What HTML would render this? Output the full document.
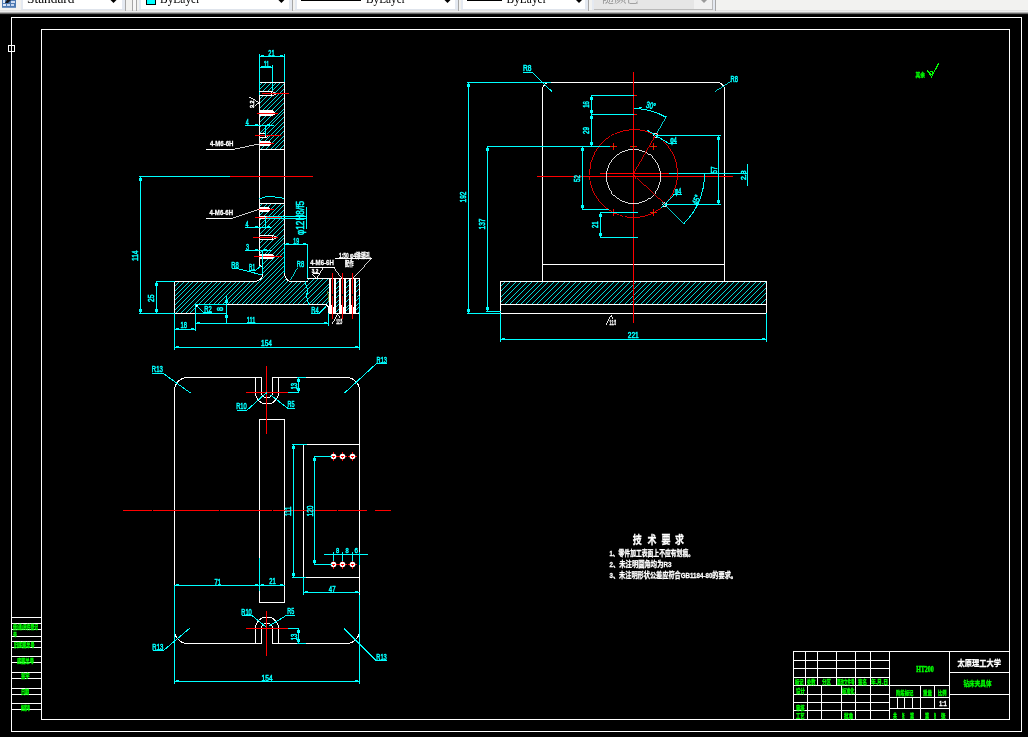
<!DOCTYPE html>
<html lang="zh"><head><meta charset="utf-8"><title>CAD drawing</title>
<style>
html,body{margin:0;padding:0;background:#000;overflow:hidden}
svg{display:block;will-change:transform}
svg path,svg circle{fill:none;shape-rendering:crispEdges}
.c{shape-rendering:crispEdges}
.t{font-family:"Liberation Sans","Noto Sans CJK SC",sans-serif}
.s{font-family:"Liberation Serif","Noto Serif CJK SC",serif}
.k{font-family:"Liberation Sans","Noto Sans CJK SC",sans-serif;font-weight:700}
</style></head><body>
<svg width="1028" height="737" viewBox="0 0 1028 737">
<defs><clipPath id="h1"><path d="M259.5 82.5H284.5V149.5H259.5Z"/></clipPath>
<clipPath id="h2"><path d="M259.5 203.5H284.5V273Q285 281.5 292 281.5H307.5V278.5H329.5V313.5H328.5V308Q328 304.5 324.5 304.5H199.5Q195.5 304.5 195.5 308.5V313.5H174.5V281.5H254Q262.5 281 262.5 274V258H259.5Z"/></clipPath>
<clipPath id="h3"><path d="M336 278.5H339.5V313.5H336Z"/></clipPath>
<clipPath id="h4"><path d="M345.5 278.5H349.5V313.5H345.5Z"/></clipPath>
<clipPath id="h5"><path d="M356 278.5H359.5V313.5H356Z"/></clipPath>
<clipPath id="h6"><path d="M500.5 281.5H766.5V304.5H500.5Z"/></clipPath></defs>
<rect x="0" y="0" width="1028" height="737" fill="#000" stroke="none"/>
<rect x="0" y="0" width="1028" height="10" fill="#f2f2f0" stroke="none"/>
<rect x="0" y="10" width="1028" height="1" fill="#e2e2e2" stroke="none"/>
<rect x="0" y="11" width="1028" height="1" fill="#ececec" stroke="none"/>
<rect x="0" y="12" width="1028" height="1" fill="#b4b4b4" stroke="none"/>
<rect x="0" y="13" width="1028" height="1" fill="#6a6a6a" stroke="none"/>
<rect x="0" y="14" width="1028" height="1" fill="#0c0c0c" stroke="none"/>
<rect x="2" y="0" width="14" height="8" fill="#4d7ab2" stroke="none"/>
<rect x="2" y="7" width="14" height="1" fill="#6f93c2" stroke="none"/>
<rect x="3" y="0" width="2" height="3" fill="#dbe6f6" stroke="none"/>
<rect x="11" y="1" width="4" height="2" fill="#cfdcf1" stroke="none"/>
<polygon points="5,3 7,0 11,0 10,1 8,3" fill="#15171c"/>
<rect x="3" y="4" width="3" height="2" fill="#dfe8f7" stroke="none"/>
<rect x="7" y="4" width="3" height="2" fill="#c6d6ef" stroke="none"/>
<rect x="11" y="4" width="3" height="2" fill="#c6d6ef" stroke="none"/>
<rect x="21" y="0" width="104" height="10" fill="#e4e9f1" stroke="none"/>
<rect x="23" y="0" width="99" height="10" fill="#ffffff" stroke="none"/>
<rect x="21" y="9" width="104" height="1" fill="#dfe4ec" stroke="none"/>
<rect x="125" y="0" width="1" height="11" fill="#a6a6a6" stroke="none"/>
<rect x="132" y="0" width="1" height="11" fill="#a6a6a6" stroke="none"/>
<rect x="136" y="0" width="1" height="11" fill="#a6a6a6" stroke="none"/>
<rect x="133" y="0" width="3" height="10" fill="#f7f7f7" stroke="none"/>
<rect x="139" y="0" width="153" height="10" fill="#e4e9f1" stroke="none"/>
<rect x="141" y="0" width="148" height="10" fill="#ffffff" stroke="none"/>
<rect x="139" y="9" width="153" height="1" fill="#dfe4ec" stroke="none"/>
<rect x="292" y="0" width="1" height="11" fill="#a6a6a6" stroke="none"/>
<rect x="295" y="0" width="163" height="10" fill="#e4e9f1" stroke="none"/>
<rect x="297" y="0" width="158" height="10" fill="#ffffff" stroke="none"/>
<rect x="295" y="9" width="163" height="1" fill="#dfe4ec" stroke="none"/>
<rect x="458" y="0" width="1" height="11" fill="#a6a6a6" stroke="none"/>
<rect x="461" y="0" width="127" height="10" fill="#e4e9f1" stroke="none"/>
<rect x="463" y="0" width="122" height="10" fill="#ffffff" stroke="none"/>
<rect x="461" y="9" width="127" height="1" fill="#dfe4ec" stroke="none"/>
<rect x="588" y="0" width="1" height="11" fill="#a6a6a6" stroke="none"/>
<rect x="592" y="0" width="123" height="10" fill="#e4e9f1" stroke="none"/>
<rect x="594" y="0" width="118" height="10" fill="#e6e6e6" stroke="none"/>
<rect x="592" y="9" width="123" height="1" fill="#dfe4ec" stroke="none"/>
<rect x="715" y="0" width="1" height="11" fill="#a6a6a6" stroke="none"/>
<rect x="694" y="0" width="18" height="9" fill="#f1f1f1" stroke="none"/>
<rect x="594" y="9" width="119" height="1" fill="#b9b9b9" stroke="none"/>
<rect x="712" y="0" width="1" height="10" fill="#b9b9b9" stroke="none"/>
<text class="s" x="27" y="2.6" fill="#000" font-size="12.5" textLength="47.5" lengthAdjust="spacingAndGlyphs">Standard</text>
<text class="s" x="160" y="2.6" fill="#000" font-size="12.5" textLength="40" lengthAdjust="spacingAndGlyphs">ByLayer</text>
<text class="s" x="366" y="2.6" fill="#000" font-size="12.5" textLength="39.5" lengthAdjust="spacingAndGlyphs">ByLayer</text>
<text class="s" x="506.5" y="2.6" fill="#000" font-size="12.5" textLength="40" lengthAdjust="spacingAndGlyphs">ByLayer</text>
<text class="s" x="602" y="3.2" fill="#8c8c8c" font-size="12" textLength="36.5" lengthAdjust="spacingAndGlyphs">随颜色</text>
<rect x="146" y="0" width="10" height="5" fill="#000" stroke="none"/>
<rect x="147" y="0" width="8" height="4" fill="#00ffff" stroke="none"/>
<rect x="301" y="0" width="60" height="1" fill="#000" stroke="none"/>
<rect x="467" y="0" width="35" height="1" fill="#000" stroke="none"/>
<polygon points="110.5,0 116.5,0 113.5,3" fill="#000"/>
<polygon points="278.4,0 284.4,0 281.4,3" fill="#000"/>
<polygon points="444.5,0 450.5,0 447.5,3" fill="#000"/>
<polygon points="576,0 582,0 579,3" fill="#000"/>
<polygon points="701,0 707,0 704,3" fill="#9a9a9a"/>
<path d="M11 17.5H1022" stroke="#ffffff" stroke-width="1" class="c"/>
<path d="M11 731.5H1022" stroke="#ffffff" stroke-width="1" class="c"/>
<path d="M11.5 17V732" stroke="#ffffff" stroke-width="1" class="c"/>
<path d="M1021.5 17V732" stroke="#ffffff" stroke-width="1" class="c"/>
<path d="M41 29.5H1010" stroke="#ffffff" stroke-width="1" class="c"/>
<path d="M41 719.5H1010" stroke="#ffffff" stroke-width="1" class="c"/>
<path d="M41.5 29V720" stroke="#ffffff" stroke-width="1" class="c"/>
<path d="M1009.5 29V720" stroke="#ffffff" stroke-width="1" class="c"/>
<rect x="8.5" y="45.5" width="6" height="6" fill="none" stroke="#fff" stroke-width="1" class="c"/>
<path d="M11 617.5H42" stroke="#ffffff" stroke-width="1" class="c"/>
<path d="M11 623.5H42" stroke="#ffffff" stroke-width="1" class="c"/>
<path d="M11 629.5H42" stroke="#ffffff" stroke-width="1" class="c"/>
<path d="M11 636.5H42" stroke="#ffffff" stroke-width="1" class="c"/>
<path d="M11 641.5H42" stroke="#ffffff" stroke-width="1" class="c"/>
<path d="M11 647.5H42" stroke="#ffffff" stroke-width="1" class="c"/>
<path d="M11 656.5H42" stroke="#ffffff" stroke-width="1" class="c"/>
<path d="M11 662.5H42" stroke="#ffffff" stroke-width="1" class="c"/>
<path d="M11 672.5H42" stroke="#ffffff" stroke-width="1" class="c"/>
<path d="M11 678.5H42" stroke="#ffffff" stroke-width="1" class="c"/>
<path d="M11 688.5H42" stroke="#ffffff" stroke-width="1" class="c"/>
<path d="M11 694.5H42" stroke="#ffffff" stroke-width="1" class="c"/>
<path d="M11 703.5H42" stroke="#ffffff" stroke-width="1" class="c"/>
<path d="M11 709.5H42" stroke="#ffffff" stroke-width="1" class="c"/>
<text class="k" x="13" y="629.3" fill="#00ff00" font-size="6.2" textLength="25" lengthAdjust="spacingAndGlyphs" stroke="#00ff00" stroke-width="0.3">借(通)用件登记</text>
<text class="k" x="13" y="635.6" fill="#00ff00" font-size="5" textLength="4" lengthAdjust="spacingAndGlyphs" stroke="#00ff00" stroke-width="0.3">号</text>
<text class="k" x="14" y="647.4" fill="#00ff00" font-size="6.2" textLength="20.5" lengthAdjust="spacingAndGlyphs" stroke="#00ff00" stroke-width="0.3">旧底图总号</text>
<text class="k" x="17" y="663" fill="#00ff00" font-size="6.2" textLength="17" lengthAdjust="spacingAndGlyphs" stroke="#00ff00" stroke-width="0.3">底图总号</text>
<text class="k" x="21" y="678.3" fill="#00ff00" font-size="6.2" textLength="8.6" lengthAdjust="spacingAndGlyphs" stroke="#00ff00" stroke-width="0.3">签字</text>
<text class="k" x="21" y="694.2" fill="#00ff00" font-size="6.2" textLength="8.2" lengthAdjust="spacingAndGlyphs" stroke="#00ff00" stroke-width="0.3">日期</text>
<text class="k" x="21" y="710.2" fill="#00ff00" font-size="6.2" textLength="9" lengthAdjust="spacingAndGlyphs" stroke="#00ff00" stroke-width="0.3">档案号</text>
<path d="M793 651.5H1010" stroke="#ffffff" stroke-width="1" class="c"/>
<path d="M793.5 651V720" stroke="#ffffff" stroke-width="1" class="c"/>
<path d="M793 660.5H890" stroke="#ffffff" stroke-width="1" class="c"/>
<path d="M793 668.5H890" stroke="#ffffff" stroke-width="1" class="c"/>
<path d="M793 677.5H890" stroke="#ffffff" stroke-width="1" class="c"/>
<path d="M793 685.5H890" stroke="#ffffff" stroke-width="1" class="c"/>
<path d="M805.5 651V686" stroke="#ffffff" stroke-width="1" class="c"/>
<path d="M817.5 651V686" stroke="#ffffff" stroke-width="1" class="c"/>
<path d="M836.5 651V686" stroke="#ffffff" stroke-width="1" class="c"/>
<path d="M855.5 651V686" stroke="#ffffff" stroke-width="1" class="c"/>
<path d="M870.5 651V686" stroke="#ffffff" stroke-width="1" class="c"/>
<path d="M793 694.5H890" stroke="#ffffff" stroke-width="1" class="c"/>
<path d="M793 702.5H890" stroke="#ffffff" stroke-width="1" class="c"/>
<path d="M793 710.5H890" stroke="#ffffff" stroke-width="1" class="c"/>
<path d="M807.5 685V720" stroke="#ffffff" stroke-width="1" class="c"/>
<path d="M821.5 685V720" stroke="#ffffff" stroke-width="1" class="c"/>
<path d="M841.5 685V720" stroke="#ffffff" stroke-width="1" class="c"/>
<path d="M855.5 685V720" stroke="#ffffff" stroke-width="1" class="c"/>
<path d="M870.5 685V720" stroke="#ffffff" stroke-width="1" class="c"/>
<path d="M889.5 651V720" stroke="#ffffff" stroke-width="1" class="c"/>
<path d="M889 685.5H950" stroke="#ffffff" stroke-width="1" class="c"/>
<path d="M889 697.5H950" stroke="#ffffff" stroke-width="1" class="c"/>
<path d="M889 708.5H950" stroke="#ffffff" stroke-width="1" class="c"/>
<path d="M920.5 685V720" stroke="#ffffff" stroke-width="1" class="c"/>
<path d="M934.5 685V709" stroke="#ffffff" stroke-width="1" class="c"/>
<path d="M897.5 697V709" stroke="#ffffff" stroke-width="1" class="c"/>
<path d="M904.5 697V709" stroke="#ffffff" stroke-width="1" class="c"/>
<path d="M912.5 697V709" stroke="#ffffff" stroke-width="1" class="c"/>
<path d="M949.5 651V720" stroke="#ffffff" stroke-width="1" class="c"/>
<path d="M949 672.5H1010" stroke="#ffffff" stroke-width="1" class="c"/>
<path d="M949 694.5H1010" stroke="#ffffff" stroke-width="1" class="c"/>
<text class="s" x="925" y="671.6" fill="#00ff00" font-size="7.8" textLength="17.5" lengthAdjust="spacingAndGlyphs" text-anchor="middle" font-weight="700" stroke="#00ff00" stroke-width="0.45">HT200</text>
<text class="k" x="957.5" y="666.2" fill="#ffffff" font-size="8.3" textLength="43.5" lengthAdjust="spacingAndGlyphs" stroke="#ffffff" stroke-width="0.3">太原理工大学</text>
<text class="k" x="963.5" y="686.4" fill="#00ff00" font-size="7.2" textLength="28" lengthAdjust="spacingAndGlyphs" stroke="#00ff00" stroke-width="0.3">钻床夹具体</text>
<text class="t" x="939.3" y="706" fill="#ffffff" font-size="7.6" textLength="7.4" lengthAdjust="spacingAndGlyphs" stroke="#ffffff" stroke-width="0.55">1:1</text>
<text class="k" x="795" y="684.3" fill="#00ff00" font-size="6.2" textLength="8.5" lengthAdjust="spacingAndGlyphs" stroke="#00ff00" stroke-width="0.3">标记</text>
<text class="k" x="807" y="684.3" fill="#00ff00" font-size="6.2" textLength="8.5" lengthAdjust="spacingAndGlyphs" stroke="#00ff00" stroke-width="0.3">处数</text>
<text class="k" x="822" y="684.3" fill="#00ff00" font-size="6.2" textLength="9" lengthAdjust="spacingAndGlyphs" stroke="#00ff00" stroke-width="0.3">分区</text>
<text class="k" x="837" y="684.3" fill="#00ff00" font-size="6.2" textLength="17.5" lengthAdjust="spacingAndGlyphs" stroke="#00ff00" stroke-width="0.3">更改文件号</text>
<text class="k" x="858" y="684.3" fill="#00ff00" font-size="6.2" textLength="9" lengthAdjust="spacingAndGlyphs" stroke="#00ff00" stroke-width="0.3">签名</text>
<text class="k" x="871" y="684.3" fill="#00ff00" font-size="6.2" textLength="17" lengthAdjust="spacingAndGlyphs" stroke="#00ff00" stroke-width="0.3">年.月.日</text>
<text class="k" x="796" y="693" fill="#00ff00" font-size="6.2" textLength="9" lengthAdjust="spacingAndGlyphs" stroke="#00ff00" stroke-width="0.3">设计</text>
<text class="k" x="842" y="693" fill="#00ff00" font-size="6.2" textLength="12.5" lengthAdjust="spacingAndGlyphs" stroke="#00ff00" stroke-width="0.3">标准化</text>
<text class="k" x="796" y="710" fill="#00ff00" font-size="6.2" textLength="8.5" lengthAdjust="spacingAndGlyphs" stroke="#00ff00" stroke-width="0.3">审核</text>
<text class="k" x="796" y="718.3" fill="#00ff00" font-size="6.2" textLength="8.5" lengthAdjust="spacingAndGlyphs" stroke="#00ff00" stroke-width="0.3">工艺</text>
<text class="k" x="844" y="718.3" fill="#00ff00" font-size="6.2" textLength="9" lengthAdjust="spacingAndGlyphs" stroke="#00ff00" stroke-width="0.3">批准</text>
<text class="k" x="896" y="695.2" fill="#00ff00" font-size="6.2" textLength="17.5" lengthAdjust="spacingAndGlyphs" stroke="#00ff00" stroke-width="0.3">阶段标记</text>
<text class="k" x="923" y="695.2" fill="#00ff00" font-size="6.2" textLength="9" lengthAdjust="spacingAndGlyphs" stroke="#00ff00" stroke-width="0.3">重量</text>
<text class="k" x="938" y="695.2" fill="#00ff00" font-size="6.2" textLength="8.5" lengthAdjust="spacingAndGlyphs" stroke="#00ff00" stroke-width="0.3">比例</text>
<text class="k" x="893" y="717.5" fill="#00ff00" font-size="6.2" textLength="4" lengthAdjust="spacingAndGlyphs" stroke="#00ff00" stroke-width="0.3">共</text>
<text class="k" x="902" y="717.5" fill="#00ff00" font-size="6.2" textLength="2.5" lengthAdjust="spacingAndGlyphs" stroke="#00ff00" stroke-width="0.3">张</text>
<text class="k" x="910" y="717.5" fill="#00ff00" font-size="6.2" textLength="4" lengthAdjust="spacingAndGlyphs" stroke="#00ff00" stroke-width="0.3">第</text>
<text class="k" x="925" y="717.5" fill="#00ff00" font-size="6.2" textLength="4" lengthAdjust="spacingAndGlyphs" stroke="#00ff00" stroke-width="0.3">第</text>
<text class="k" x="934" y="717.5" fill="#00ff00" font-size="6.2" textLength="2" lengthAdjust="spacingAndGlyphs" stroke="#00ff00" stroke-width="0.3">张</text>
<text class="k" x="941" y="717.5" fill="#00ff00" font-size="6.2" textLength="4.5" lengthAdjust="spacingAndGlyphs" stroke="#00ff00" stroke-width="0.3">张</text>
<text class="k" x="915.5" y="76.8" fill="#00ff00" font-size="6.2" textLength="9.5" lengthAdjust="spacingAndGlyphs" stroke="#00ff00" stroke-width="0.3">其余</text>
<path d="M927.2 70.2L931.5 77L938.7 63.3" stroke="#00ff00" stroke-width="1"/>
<circle cx="931.3" cy="72.6" r="1.6" stroke="#00ff00" stroke-width="1"/>
<text class="k" x="632.8" y="543.8" fill="#ffffff" font-size="11.5" textLength="9" lengthAdjust="spacingAndGlyphs" stroke="#ffffff" stroke-width="0.3">技</text>
<text class="k" x="647.5" y="543.8" fill="#ffffff" font-size="11.5" textLength="9" lengthAdjust="spacingAndGlyphs" stroke="#ffffff" stroke-width="0.3">术</text>
<text class="k" x="661.5" y="543.8" fill="#ffffff" font-size="11.5" textLength="9" lengthAdjust="spacingAndGlyphs" stroke="#ffffff" stroke-width="0.3">要</text>
<text class="k" x="675" y="543.8" fill="#ffffff" font-size="11.5" textLength="9" lengthAdjust="spacingAndGlyphs" stroke="#ffffff" stroke-width="0.3">求</text>
<text class="k" x="609.5" y="556.2" fill="#ffffff" font-size="7.8" textLength="84.5" lengthAdjust="spacingAndGlyphs" stroke="#ffffff" stroke-width="0.3">1、零件加工表面上不应有划痕。</text>
<text class="k" x="609.5" y="567.2" fill="#ffffff" font-size="7.8" textLength="62" lengthAdjust="spacingAndGlyphs" stroke="#ffffff" stroke-width="0.3">2、未注明圆角均为R3</text>
<text class="k" x="609.5" y="578.2" fill="#ffffff" font-size="7.8" textLength="127.5" lengthAdjust="spacingAndGlyphs" stroke="#ffffff" stroke-width="0.3">3、未注明形状公差应符合GB1184-80的要求。</text>
<path clip-path="url(#h1)" d="M189.8 150L257.8 82M194.5 150L262.5 82M199.2 150L267.2 82M203.9 150L271.9 82M208.6 150L276.6 82M213.3 150L281.3 82M218 150L286 82M222.7 150L290.7 82M227.4 150L295.4 82M232.1 150L300.1 82M236.8 150L304.8 82M241.5 150L309.5 82M246.2 150L314.2 82M250.9 150L318.9 82M255.6 150L323.6 82M260.3 150L328.3 82M265 150L333 82M269.7 150L337.7 82M274.4 150L342.4 82M279.1 150L347.1 82M283.8 150L351.8 82M288.5 150L356.5 82" stroke="#00ffff" stroke-width="0.85" class="c"/>
<path clip-path="url(#h2)" d="M62.5 314L173.5 203M67.2 314L178.2 203M71.9 314L182.9 203M76.6 314L187.6 203M81.3 314L192.3 203M86 314L197 203M90.7 314L201.7 203M95.4 314L206.4 203M100.1 314L211.1 203M104.8 314L215.8 203M109.5 314L220.5 203M114.2 314L225.2 203M118.9 314L229.9 203M123.6 314L234.6 203M128.3 314L239.3 203M133 314L244 203M137.7 314L248.7 203M142.4 314L253.4 203M147.1 314L258.1 203M151.8 314L262.8 203M156.5 314L267.5 203M161.2 314L272.2 203M165.9 314L276.9 203M170.6 314L281.6 203M175.3 314L286.3 203M180 314L291 203M184.7 314L295.7 203M189.4 314L300.4 203M194.1 314L305.1 203M198.8 314L309.8 203M203.5 314L314.5 203M208.2 314L319.2 203M212.9 314L323.9 203M217.6 314L328.6 203M222.3 314L333.3 203M227 314L338 203M231.7 314L342.7 203M236.4 314L347.4 203M241.1 314L352.1 203M245.8 314L356.8 203M250.5 314L361.5 203M255.2 314L366.2 203M259.9 314L370.9 203M264.6 314L375.6 203M269.3 314L380.3 203M274 314L385 203M278.7 314L389.7 203M283.4 314L394.4 203M288.1 314L399.1 203M292.8 314L403.8 203M297.5 314L408.5 203M302.2 314L413.2 203M306.9 314L417.9 203M311.6 314L422.6 203M316.3 314L427.3 203M321 314L432 203M325.7 314L436.7 203M330.4 314L441.4 203" stroke="#00ffff" stroke-width="0.85" class="c"/>
<path clip-path="url(#h3)" d="M301.3 314L337.3 278M305.95 314L341.95 278M310.6 314L346.6 278M315.25 314L351.25 278M319.9 314L355.9 278M324.55 314L360.55 278M329.2 314L365.2 278M333.85 314L369.85 278M338.5 314L374.5 278M343.15 314L379.15 278" stroke="#00ffff" stroke-width="0.85" class="c"/>
<path clip-path="url(#h4)" d="M310.6 314L346.6 278M315.25 314L351.25 278M319.9 314L355.9 278M324.55 314L360.55 278M329.2 314L365.2 278M333.85 314L369.85 278M338.5 314L374.5 278M343.15 314L379.15 278M347.8 314L383.8 278M352.45 314L388.45 278" stroke="#00ffff" stroke-width="0.85" class="c"/>
<path clip-path="url(#h5)" d="M319.9 314L355.9 278M324.55 314L360.55 278M329.2 314L365.2 278M333.85 314L369.85 278M338.5 314L374.5 278M343.15 314L379.15 278M347.8 314L383.8 278M352.45 314L388.45 278M357.1 314L393.1 278M361.75 314L397.75 278" stroke="#00ffff" stroke-width="0.85" class="c"/>
<path d="M259.5 54V82" stroke="#00ffff" stroke-width="1" class="c"/>
<path d="M284.5 54V82" stroke="#00ffff" stroke-width="1" class="c"/>
<path d="M259 56.5H285" stroke="#00ffff" stroke-width="1" class="c"/>
<rect x="261" y="55" width="3" height="1" fill="#00ffff" stroke="none"/>
<rect x="280" y="55" width="3" height="1" fill="#00ffff" stroke="none"/>
<text class="t" x="268.3" y="55.6" fill="#00ffff" font-size="9.2" textLength="6.2" lengthAdjust="spacingAndGlyphs" stroke="#00ffff" stroke-width="0.55">21</text>
<path d="M272.5 65V94" stroke="#00ffff" stroke-width="1" class="c"/>
<path d="M259 67.5H273" stroke="#00ffff" stroke-width="1" class="c"/>
<rect x="261" y="66" width="3" height="1" fill="#00ffff" stroke="none"/>
<rect x="268" y="66" width="3" height="1" fill="#00ffff" stroke="none"/>
<text class="t" x="263.8" y="66.5" fill="#00ffff" font-size="9.2" textLength="5.5" lengthAdjust="spacingAndGlyphs" stroke="#00ffff" stroke-width="0.55">11</text>
<path d="M259 82.5H285" stroke="#ffffff" stroke-width="1" class="c"/>
<path d="M259.5 82V265" stroke="#ffffff" stroke-width="1" class="c"/>
<path d="M284.5 82V245" stroke="#ffffff" stroke-width="1" class="c"/>
<path d="M259.5 82V95" stroke="#00ffff" stroke-width="1" class="c"/>
<path d="M259 149.5H285" stroke="#ffffff" stroke-width="1" class="c"/>
<path d="M259 203.5H285" stroke="#ffffff" stroke-width="1" class="c"/>
<path d="M259.5 198.6C264 197.8 267 195.8 271 196.2C275 196.6 277 198.4 284.5 198" stroke="#00ffff" stroke-width="1"/>
<polygon points="260,91 272,91 275.5,93.5 272,96 260,96" fill="#000" class="c"/>
<path d="M259 91.5H272" stroke="#ffffff" stroke-width="1" class="c"/>
<path d="M259 95.5H272" stroke="#ffffff" stroke-width="1" class="c"/>
<path d="M271.5 91V96" stroke="#ffffff" stroke-width="1" class="c"/>
<path d="M271.5 91.5L275.5 93.5L271.5 95.5" stroke="#ffffff" stroke-width="0.9"/>
<path d="M262 93.5H289" stroke="#ff0000" stroke-width="1" class="c"/>
<polygon points="260,110 272,110 276.5,113.5 272,116 260,116" fill="#fff" class="c"/>
<path d="M257 113.5H278" stroke="#ff0000" stroke-width="1" class="c"/>
<polygon points="260,133 266,133 267.5,135.5 266,138 260,138" fill="#000" class="c"/>
<path d="M259 133.5H266" stroke="#ffffff" stroke-width="1" class="c"/>
<path d="M259 137.5H266" stroke="#ffffff" stroke-width="1" class="c"/>
<path d="M265.5 133V138" stroke="#ffffff" stroke-width="1" class="c"/>
<path d="M265.5 133.5L267.5 135.5L265.5 137.5" stroke="#ffffff" stroke-width="0.9"/>
<path d="M255 135.5H281" stroke="#ff0000" stroke-width="1" class="c"/>
<polygon points="260,141 269,141 271.5,143.5 269,146 260,146" fill="#fff" class="c"/>
<path d="M259 143.5H274" stroke="#ff0000" stroke-width="1" class="c"/>
<path d="M245 125.5H274" stroke="#00ffff" stroke-width="1" class="c"/>
<path d="M265.5 125V136" stroke="#00ffff" stroke-width="1" class="c"/>
<rect x="255" y="124" width="3" height="1" fill="#00ffff" stroke="none"/>
<rect x="267" y="124" width="3" height="1" fill="#00ffff" stroke="none"/>
<text class="t" x="245.8" y="124.6" fill="#00ffff" font-size="9.2" textLength="3" lengthAdjust="spacingAndGlyphs" stroke="#00ffff" stroke-width="0.55">4</text>
<path d="M249.3 97L259 102.5L254.5 105" stroke="#ffffff" stroke-width="0.9"/>
<text class="t" x="254" y="108" fill="#ffffff" font-size="5.6" textLength="7.5" lengthAdjust="spacingAndGlyphs" transform="rotate(-90 254 108)" stroke="#ffffff" stroke-width="0.55">3.2</text>
<text class="k" x="209.9" y="146.2" fill="#ffffff" font-size="7.3" textLength="23.5" lengthAdjust="spacingAndGlyphs" stroke="#ffffff" stroke-width="0.3">4-M6-6H</text>
<path d="M206 149.5H234" stroke="#ffffff" stroke-width="1" class="c"/>
<path d="M233 149.5L259.5 143.8" stroke="#ffffff" stroke-width="0.8"/>
<path d="M139 176.5H231" stroke="#00ffff" stroke-width="1" class="c"/>
<path d="M230 176.5H313" stroke="#ff0000" stroke-width="1" class="c"/>
<path d="M140.5 176V314" stroke="#00ffff" stroke-width="1" class="c"/>
<rect x="139" y="178" width="3" height="3" fill="#00ffff" stroke="none"/>
<rect x="139" y="309" width="3" height="3" fill="#00ffff" stroke="none"/>
<text class="t" x="137.6" y="261" fill="#00ffff" font-size="9.2" textLength="10.5" lengthAdjust="spacingAndGlyphs" transform="rotate(-90 137.6 261)" stroke="#00ffff" stroke-width="0.55">114</text>
<path d="M139 313.5H175" stroke="#00ffff" stroke-width="1" class="c"/>
<polygon points="260,207 268,207 270.5,209.5 268,212 260,212" fill="#fff" class="c"/>
<path d="M257 209.5H274" stroke="#ff0000" stroke-width="1" class="c"/>
<polygon points="260,216 266,216 267.5,217.5 266,219 260,219" fill="#000" class="c"/>
<path d="M259 216.5H266" stroke="#ffffff" stroke-width="1" class="c"/>
<path d="M259 218.5H266" stroke="#ffffff" stroke-width="1" class="c"/>
<path d="M265.5 216V219" stroke="#ffffff" stroke-width="1" class="c"/>
<path d="M265.5 216.5L267.5 217.5L265.5 218.5" stroke="#ffffff" stroke-width="0.9"/>
<path d="M255 217.5H281" stroke="#ff0000" stroke-width="1" class="c"/>
<path d="M267 216.5H307" stroke="#00ffff" stroke-width="1" class="c"/>
<path d="M267 218.5H307" stroke="#00ffff" stroke-width="1" class="c"/>
<polygon points="260,235 273,235 275.5,237.5 273,240 260,240" fill="#000" class="c"/>
<path d="M259 235.5H273" stroke="#ffffff" stroke-width="1" class="c"/>
<path d="M259 239.5H273" stroke="#ffffff" stroke-width="1" class="c"/>
<path d="M272.5 235V240" stroke="#ffffff" stroke-width="1" class="c"/>
<path d="M272.5 235.5L275.5 237.5L272.5 239.5" stroke="#ffffff" stroke-width="0.9"/>
<path d="M253 237.5H278" stroke="#ff0000" stroke-width="1" class="c"/>
<polygon points="260,254 272,254 274.5,256.5 272,259 260,259" fill="#fff" class="c"/>
<path d="M254 256.5H282" stroke="#ff0000" stroke-width="1" class="c"/>
<text class="k" x="209.5" y="215.2" fill="#ffffff" font-size="7.3" textLength="23.5" lengthAdjust="spacingAndGlyphs" stroke="#ffffff" stroke-width="0.3">4-M6-6H</text>
<path d="M206 218.5H232" stroke="#ffffff" stroke-width="1" class="c"/>
<path d="M231 218.5L258.5 209.6" stroke="#ffffff" stroke-width="0.8"/>
<path d="M245 227.5H272" stroke="#00ffff" stroke-width="1" class="c"/>
<path d="M265.5 217V229" stroke="#00ffff" stroke-width="1" class="c"/>
<rect x="255" y="226" width="3" height="1" fill="#00ffff" stroke="none"/>
<rect x="267" y="226" width="3" height="1" fill="#00ffff" stroke="none"/>
<text class="t" x="245.6" y="226.6" fill="#00ffff" font-size="9.2" textLength="3" lengthAdjust="spacingAndGlyphs" stroke="#00ffff" stroke-width="0.55">4</text>
<path d="M245 250.5H272" stroke="#00ffff" stroke-width="1" class="c"/>
<path d="M262.5 250V275" stroke="#00ffff" stroke-width="1" class="c"/>
<rect x="255" y="249" width="3" height="1" fill="#00ffff" stroke="none"/>
<rect x="264" y="249" width="3" height="1" fill="#00ffff" stroke="none"/>
<text class="t" x="246" y="249.6" fill="#00ffff" font-size="9.2" textLength="3" lengthAdjust="spacingAndGlyphs" stroke="#00ffff" stroke-width="0.55">3</text>
<text class="t" x="304.4" y="235" fill="#00ffff" font-size="10" textLength="34" lengthAdjust="spacingAndGlyphs" transform="rotate(-90 304.4 235)" stroke="#00ffff" stroke-width="0.55">&#966;12H8/f5</text>
<path d="M306.5 207V229" stroke="#00ffff" stroke-width="1" class="c"/>
<path d="M284 244.5H308" stroke="#00ffff" stroke-width="1" class="c"/>
<rect x="286" y="243" width="3" height="1" fill="#00ffff" stroke="none"/>
<rect x="303" y="243" width="3" height="1" fill="#00ffff" stroke="none"/>
<text class="t" x="293.3" y="243.6" fill="#00ffff" font-size="9.2" textLength="5.8" lengthAdjust="spacingAndGlyphs" stroke="#00ffff" stroke-width="0.55">19</text>
<path d="M284.5 244V274" stroke="#00ffff" stroke-width="1" class="c"/>
<path d="M307.5 244V279" stroke="#00ffff" stroke-width="1" class="c"/>
<path d="M284.5 273Q285 281.5 292 281.5" stroke="#ffffff" stroke-width="1"/>
<path d="M292 281.5H308" stroke="#ffffff" stroke-width="1" class="c"/>
<path d="M262.5 274Q262.5 281 254 281.5" stroke="#ffffff" stroke-width="1"/>
<path d="M259.5 264.5Q259.7 266.3 262.5 266.5" stroke="#ffffff" stroke-width="1"/>
<text class="t" x="231.3" y="268" fill="#00ffff" font-size="9.2" textLength="7.6" lengthAdjust="spacingAndGlyphs" stroke="#00ffff" stroke-width="0.55">R8</text>
<path d="M231.5 268.9H239L262 275" stroke="#00ffff" stroke-width="1"/>
<text class="t" x="249" y="270" fill="#00ffff" font-size="9.2" textLength="6" lengthAdjust="spacingAndGlyphs" stroke="#00ffff" stroke-width="0.55">R1</text>
<path d="M249 270.9H255L261 265.8" stroke="#00ffff" stroke-width="1"/>
<text class="t" x="296.8" y="267" fill="#00ffff" font-size="9.2" textLength="7.4" lengthAdjust="spacingAndGlyphs" stroke="#00ffff" stroke-width="0.55">R8</text>
<path d="M297 267.5L290 279.8" stroke="#00ffff" stroke-width="0.8"/>
<path d="M174 281.5H255" stroke="#ffffff" stroke-width="1" class="c"/>
<path d="M174.5 281V314" stroke="#ffffff" stroke-width="1" class="c"/>
<path d="M174 313.5H196" stroke="#ffffff" stroke-width="1" class="c"/>
<path d="M195.5 313.5V308.5Q195.5 304.5 199.5 304.5" stroke="#ffffff" stroke-width="1"/>
<path d="M199 304.5H325" stroke="#ffffff" stroke-width="1" class="c"/>
<path d="M324.5 304.5Q328 304.5 328.5 308V313.5" stroke="#ffffff" stroke-width="1"/>
<path d="M328 313.5H360" stroke="#ffffff" stroke-width="1" class="c"/>
<path d="M307 278.5H360" stroke="#ffffff" stroke-width="1" class="c"/>
<path d="M359.5 278V297" stroke="#ffffff" stroke-width="1" class="c"/>
<path d="M359.5 296V350" stroke="#00ffff" stroke-width="1" class="c"/>
<path d="M305 281.5L307.6 290L306.6 296L308.6 304.5" stroke="#00ffff" stroke-width="1"/>
<polygon points="329,278 331,278 331.7,314 329,314" fill="#fff" class="c"/>
<polygon points="334.4,278 336,278 335.6,314 333.3,314" fill="#fff" class="c"/>
<polygon points="339,278 341,278 341.7,314 339,314" fill="#fff" class="c"/>
<polygon points="344.4,278 346,278 345.6,314 343.3,314" fill="#fff" class="c"/>
<polygon points="349,278 351,278 351.7,314 349,314" fill="#fff" class="c"/>
<polygon points="354.4,278 356,278 355.6,314 353.3,314" fill="#fff" class="c"/>
<path d="M332.5 273V294" stroke="#ff0000" stroke-width="1" class="c"/>
<path d="M332.5 296V319" stroke="#ff0000" stroke-width="1" class="c"/>
<path d="M342.5 273V294" stroke="#ff0000" stroke-width="1" class="c"/>
<path d="M342.5 296V319" stroke="#ff0000" stroke-width="1" class="c"/>
<path d="M352.5 273V294" stroke="#ff0000" stroke-width="1" class="c"/>
<path d="M352.5 296V319" stroke="#ff0000" stroke-width="1" class="c"/>
<path d="M327.5 291L329 301" stroke="#88aa22" stroke-width="0.7"/>
<path d="M156 281.5H175" stroke="#00ffff" stroke-width="1" class="c"/>
<path d="M156.5 281V314" stroke="#00ffff" stroke-width="1" class="c"/>
<rect x="155" y="283" width="3" height="3" fill="#00ffff" stroke="none"/>
<rect x="155" y="309" width="3" height="3" fill="#00ffff" stroke="none"/>
<text class="t" x="153.8" y="302" fill="#00ffff" font-size="9.2" textLength="7.5" lengthAdjust="spacingAndGlyphs" transform="rotate(-90 153.8 302)" stroke="#00ffff" stroke-width="0.55">25</text>
<path d="M174.5 313V350" stroke="#00ffff" stroke-width="1" class="c"/>
<path d="M195.5 305V331" stroke="#00ffff" stroke-width="1" class="c"/>
<path d="M174 329.5H196" stroke="#00ffff" stroke-width="1" class="c"/>
<rect x="176" y="328" width="3" height="1" fill="#00ffff" stroke="none"/>
<rect x="191" y="328" width="3" height="1" fill="#00ffff" stroke="none"/>
<text class="t" x="180.5" y="328.4" fill="#00ffff" font-size="9.2" textLength="6.5" lengthAdjust="spacingAndGlyphs" stroke="#00ffff" stroke-width="0.55">18</text>
<path d="M195 304.5H227" stroke="#00ffff" stroke-width="1" class="c"/>
<path d="M195 313.5H227" stroke="#00ffff" stroke-width="1" class="c"/>
<path d="M226.5 296V324" stroke="#00ffff" stroke-width="1" class="c"/>
<rect x="225" y="300" width="3" height="3" fill="#00ffff" stroke="none"/>
<rect x="225" y="315" width="3" height="3" fill="#00ffff" stroke="none"/>
<text class="t" x="222.8" y="311" fill="#00ffff" font-size="9.2" textLength="4" lengthAdjust="spacingAndGlyphs" transform="rotate(-90 222.8 311)" stroke="#00ffff" stroke-width="0.55">8</text>
<text class="t" x="204.3" y="311.6" fill="#00ffff" font-size="9.2" textLength="7.5" lengthAdjust="spacingAndGlyphs" stroke="#00ffff" stroke-width="0.55">R2</text>
<path d="M197 306L203 312H212" stroke="#00ffff" stroke-width="1"/>
<path d="M328.5 313V326" stroke="#00ffff" stroke-width="1" class="c"/>
<path d="M195 323.5H329" stroke="#00ffff" stroke-width="1" class="c"/>
<rect x="197" y="322" width="3" height="1" fill="#00ffff" stroke="none"/>
<rect x="324" y="322" width="3" height="1" fill="#00ffff" stroke="none"/>
<text class="t" x="246.8" y="322.6" fill="#00ffff" font-size="9.2" textLength="8.5" lengthAdjust="spacingAndGlyphs" stroke="#00ffff" stroke-width="0.55">111</text>
<path d="M174 347.5H360" stroke="#00ffff" stroke-width="1" class="c"/>
<rect x="176" y="346" width="3" height="1" fill="#00ffff" stroke="none"/>
<rect x="355" y="346" width="3" height="1" fill="#00ffff" stroke="none"/>
<text class="t" x="261" y="346" fill="#00ffff" font-size="9.2" textLength="11" lengthAdjust="spacingAndGlyphs" stroke="#00ffff" stroke-width="0.55">154</text>
<text class="t" x="311.2" y="312.6" fill="#00ffff" font-size="9.2" textLength="7.5" lengthAdjust="spacingAndGlyphs" stroke="#00ffff" stroke-width="0.55">R4</text>
<path d="M311 313.4H319L326 306.5" stroke="#00ffff" stroke-width="1"/>
<text class="k" x="310.2" y="265.2" fill="#ffffff" font-size="7.6" textLength="23.7" lengthAdjust="spacingAndGlyphs" stroke="#ffffff" stroke-width="0.3">4-M6-6H</text>
<path d="M309 267.5H335" stroke="#ffffff" stroke-width="1" class="c"/>
<path d="M334.5 267.5L341.8 277.5" stroke="#ffffff" stroke-width="0.8"/>
<text class="k" x="339" y="258.2" fill="#ffffff" font-size="6.6" textLength="31.5" lengthAdjust="spacingAndGlyphs" stroke="#ffffff" stroke-width="0.3">1:50 &#966;4锥销孔</text>
<text class="k" x="345" y="265.6" fill="#ffffff" font-size="6.6" textLength="8.5" lengthAdjust="spacingAndGlyphs" stroke="#ffffff" stroke-width="0.3">配作</text>
<path d="M335 258.5H372" stroke="#ffffff" stroke-width="1" class="c"/>
<path d="M371 259L353.5 277.8" stroke="#ffffff" stroke-width="0.8"/>
<text class="k" x="311.8" y="272.6" fill="#ffffff" font-size="5" textLength="6.4" lengthAdjust="spacingAndGlyphs" stroke="#ffffff" stroke-width="0.3">3.2</text>
<path d="M312.8 273.5L316.9 278.3L323 268" stroke="#ffffff" stroke-width="0.9"/>
<path d="M313 273.5H320" stroke="#ffffff" stroke-width="1" class="c"/>
<path d="M332.2 323.8L337.6 314L340 318" stroke="#ffffff" stroke-width="0.9"/>
<text class="k" x="336.3" y="323.8" fill="#ffffff" font-size="6.4" textLength="6" lengthAdjust="spacingAndGlyphs" stroke="#ffffff" stroke-width="0.3">12.5</text>
<path clip-path="url(#h6)" d="M476.35 305L500.35 281M481.8 305L505.8 281M487.25 305L511.25 281M492.7 305L516.7 281M498.15 305L522.15 281M503.6 305L527.6 281M509.05 305L533.05 281M514.5 305L538.5 281M519.95 305L543.95 281M525.4 305L549.4 281M530.85 305L554.85 281M536.3 305L560.3 281M541.75 305L565.75 281M547.2 305L571.2 281M552.65 305L576.65 281M558.1 305L582.1 281M563.55 305L587.55 281M569 305L593 281M574.45 305L598.45 281M579.9 305L603.9 281M585.35 305L609.35 281M590.8 305L614.8 281M596.25 305L620.25 281M601.7 305L625.7 281M607.15 305L631.15 281M612.6 305L636.6 281M618.05 305L642.05 281M623.5 305L647.5 281M628.95 305L652.95 281M634.4 305L658.4 281M639.85 305L663.85 281M645.3 305L669.3 281M650.75 305L674.75 281M656.2 305L680.2 281M661.65 305L685.65 281M667.1 305L691.1 281M672.55 305L696.55 281M678 305L702 281M683.45 305L707.45 281M688.9 305L712.9 281M694.35 305L718.35 281M699.8 305L723.8 281M705.25 305L729.25 281M710.7 305L734.7 281M716.15 305L740.15 281M721.6 305L745.6 281M727.05 305L751.05 281M732.5 305L756.5 281M737.95 305L761.95 281M743.4 305L767.4 281M748.85 305L772.85 281M754.3 305L778.3 281M759.75 305L783.75 281M765.2 305L789.2 281M770.65 305L794.65 281" stroke="#00ffff" stroke-width="0.85" class="c"/>
<path d="M542.5 281V90.5Q542.5 82.5 550.5 82.5H716.5Q724.5 82.5 724.5 90.5V281" stroke="#ffffff" stroke-width="1" class="c"/>
<path d="M542 82.5H551" stroke="#00ffff" stroke-width="1" class="c"/>
<path d="M542 264.5H725" stroke="#ffffff" stroke-width="1" class="c"/>
<path d="M500 281.5H767" stroke="#ffffff" stroke-width="1" class="c"/>
<path d="M500 304.5H767" stroke="#ffffff" stroke-width="1" class="c"/>
<path d="M500 313.5H767" stroke="#ffffff" stroke-width="1" class="c"/>
<path d="M500.5 281V314" stroke="#ffffff" stroke-width="1" class="c"/>
<path d="M766.5 281V314" stroke="#ffffff" stroke-width="1" class="c"/>
<path d="M633.5 72V323" stroke="#ff0000" stroke-width="1" class="c"/>
<path d="M537 176.5H733" stroke="#ff0000" stroke-width="1" class="c"/>
<path d="M600 173.5H670" stroke="#ff0000" stroke-width="1" class="c"/>
<path d="M669 173.5H748" stroke="#00ffff" stroke-width="1" class="c"/>
<path d="M747.5 164V186" stroke="#00ffff" stroke-width="1" class="c"/>
<text class="t" x="745.6" y="180" fill="#00ffff" font-size="7" textLength="9.5" lengthAdjust="spacingAndGlyphs" transform="rotate(-90 745.6 180)" stroke="#00ffff" stroke-width="0.55">2.8</text>
<circle cx="633.5" cy="176.5" r="27" stroke="#ffffff" stroke-width="0.85"/>
<circle cx="633.5" cy="173.5" r="44" stroke="#ff0000" stroke-width="0.85" stroke-dasharray="46 1.5 3 1.5" stroke-dashoffset="20"/>
<path d="M630 95.5H637" stroke="#ff0000" stroke-width="1" class="c"/>
<path d="M633.5 92V99" stroke="#ff0000" stroke-width="1" class="c"/>
<rect x="633" y="95" width="1" height="1" fill="#00ff00" stroke="none"/>
<path d="M630 114.5H637" stroke="#ff0000" stroke-width="1" class="c"/>
<path d="M633.5 111V118" stroke="#ff0000" stroke-width="1" class="c"/>
<rect x="633" y="114" width="1" height="1" fill="#00ff00" stroke="none"/>
<path d="M610 146.5H617" stroke="#ff0000" stroke-width="1" class="c"/>
<path d="M613.5 143V150" stroke="#ff0000" stroke-width="1" class="c"/>
<rect x="613" y="146" width="1" height="1" fill="#00ff00" stroke="none"/>
<path d="M630 146.5H637" stroke="#ff0000" stroke-width="1" class="c"/>
<path d="M633.5 143V150" stroke="#ff0000" stroke-width="1" class="c"/>
<rect x="633" y="146" width="1" height="1" fill="#00ff00" stroke="none"/>
<path d="M650 146.5H657" stroke="#ff0000" stroke-width="1" class="c"/>
<path d="M653.5 143V150" stroke="#ff0000" stroke-width="1" class="c"/>
<rect x="653" y="146" width="1" height="1" fill="#00ff00" stroke="none"/>
<path d="M610 212.5H617" stroke="#ff0000" stroke-width="1" class="c"/>
<path d="M613.5 209V216" stroke="#ff0000" stroke-width="1" class="c"/>
<rect x="613" y="212" width="1" height="1" fill="#00ff00" stroke="none"/>
<path d="M630 212.5H637" stroke="#ff0000" stroke-width="1" class="c"/>
<path d="M633.5 209V216" stroke="#ff0000" stroke-width="1" class="c"/>
<rect x="633" y="212" width="1" height="1" fill="#00ff00" stroke="none"/>
<path d="M650 212.5H657" stroke="#ff0000" stroke-width="1" class="c"/>
<path d="M653.5 209V216" stroke="#ff0000" stroke-width="1" class="c"/>
<rect x="653" y="212" width="1" height="1" fill="#00ff00" stroke="none"/>
<path d="M630 237.5H637" stroke="#ff0000" stroke-width="1" class="c"/>
<path d="M633.5 234V241" stroke="#ff0000" stroke-width="1" class="c"/>
<rect x="633" y="237" width="1" height="1" fill="#00ff00" stroke="none"/>
<path d="M633.5 173.5L655.5 135.39" stroke="#ff0000" stroke-width="0.8"/>
<path d="M655.5 135.39L666.75 115.91" stroke="#00ffff" stroke-width="0.8"/>
<path d="M636.5 178.5L664.61 204.61" stroke="#ff0000" stroke-width="0.8"/>
<path d="M664.61 204.61L683.7 223.7" stroke="#00ffff" stroke-width="0.8"/>
<path d="M633.5 173.5L636.5 178.5" stroke="#ff0000" stroke-width="0.8"/>
<path d="M633.5 108.5A65 65 0 0 1 666 117.21" stroke="#00ffff" stroke-width="1"/>
<path d="M704.5 174.5A71 71 0 0 1 683.7 223.7" stroke="#00ffff" stroke-width="1"/>
<rect x="639" y="107" width="3" height="1" fill="#00ffff" stroke="none"/>
<text class="t" x="645.5" y="107.5" fill="#00ffff" font-size="9.2" textLength="9.5" lengthAdjust="spacingAndGlyphs" transform="rotate(14 645.5 107.5)" stroke="#00ffff" stroke-width="0.55">30&#176;</text>
<text class="t" x="697.5" y="205.5" fill="#00ffff" font-size="9.2" textLength="9.5" lengthAdjust="spacingAndGlyphs" transform="rotate(-66 697.5 205.5)" stroke="#00ffff" stroke-width="0.55">45&#176;</text>
<circle cx="655.5" cy="135.39" r="1.8" stroke="#ffffff" stroke-width="0.9"/>
<path d="M653 132.89L658 137.89" stroke="#00ffff" stroke-width="0.8"/>
<path d="M653 137.89L658 132.89" stroke="#ff0000" stroke-width="0.8"/>
<circle cx="664.61" cy="204.61" r="1.8" stroke="#ffffff" stroke-width="0.9"/>
<path d="M662.11 202.11L667.11 207.11" stroke="#00ffff" stroke-width="0.8"/>
<path d="M662.11 207.11L667.11 202.11" stroke="#ff0000" stroke-width="0.8"/>
<text class="t" x="670.2" y="143" fill="#00ffff" font-size="9.2" textLength="6.5" lengthAdjust="spacingAndGlyphs" stroke="#00ffff" stroke-width="0.55">&#966;4</text>
<path d="M647.5 130.39L669 143.5H677" stroke="#00ffff" stroke-width="1"/>
<text class="t" x="674.8" y="193.6" fill="#00ffff" font-size="9.2" textLength="6.5" lengthAdjust="spacingAndGlyphs" stroke="#00ffff" stroke-width="0.55">&#966;4</text>
<path d="M661.61 207.61L674.5 194.2H682" stroke="#00ffff" stroke-width="1"/>
<path d="M591 95.5H634" stroke="#00ffff" stroke-width="1" class="c"/>
<path d="M591 114.5H634" stroke="#00ffff" stroke-width="1" class="c"/>
<path d="M591.5 95V115" stroke="#00ffff" stroke-width="1" class="c"/>
<rect x="590" y="97" width="3" height="3" fill="#00ffff" stroke="none"/>
<rect x="590" y="110" width="3" height="3" fill="#00ffff" stroke="none"/>
<path d="M591.5 114V147" stroke="#00ffff" stroke-width="1" class="c"/>
<rect x="590" y="116" width="3" height="3" fill="#00ffff" stroke="none"/>
<rect x="590" y="142" width="3" height="3" fill="#00ffff" stroke="none"/>
<text class="t" x="589.4" y="107.8" fill="#00ffff" font-size="9.2" textLength="6.5" lengthAdjust="spacingAndGlyphs" transform="rotate(-90 589.4 107.8)" stroke="#00ffff" stroke-width="0.55">16</text>
<text class="t" x="589.4" y="134" fill="#00ffff" font-size="9.2" textLength="7" lengthAdjust="spacingAndGlyphs" transform="rotate(-90 589.4 134)" stroke="#00ffff" stroke-width="0.55">29</text>
<path d="M487 146.5H610" stroke="#00ffff" stroke-width="1" class="c"/>
<path d="M582.5 146V210" stroke="#00ffff" stroke-width="1" class="c"/>
<rect x="581" y="148" width="3" height="3" fill="#00ffff" stroke="none"/>
<rect x="581" y="205" width="3" height="3" fill="#00ffff" stroke="none"/>
<path d="M582 209.5H609" stroke="#00ffff" stroke-width="1" class="c"/>
<text class="t" x="579.6" y="182" fill="#00ffff" font-size="9.2" textLength="7" lengthAdjust="spacingAndGlyphs" transform="rotate(-90 579.6 182)" stroke="#00ffff" stroke-width="0.55">52</text>
<path d="M600 212.5H638" stroke="#00ffff" stroke-width="1" class="c"/>
<path d="M600 237.5H638" stroke="#00ffff" stroke-width="1" class="c"/>
<path d="M600.5 212V238" stroke="#00ffff" stroke-width="1" class="c"/>
<rect x="599" y="214" width="3" height="3" fill="#00ffff" stroke="none"/>
<rect x="599" y="233" width="3" height="3" fill="#00ffff" stroke="none"/>
<text class="t" x="598" y="228" fill="#00ffff" font-size="9.2" textLength="6.5" lengthAdjust="spacingAndGlyphs" transform="rotate(-90 598 228)" stroke="#00ffff" stroke-width="0.55">21</text>
<path d="M656 135.5H721" stroke="#00ffff" stroke-width="1" class="c"/>
<path d="M665 204.5H721" stroke="#00ffff" stroke-width="1" class="c"/>
<path d="M718.5 135V205" stroke="#00ffff" stroke-width="1" class="c"/>
<rect x="717" y="137" width="3" height="3" fill="#00ffff" stroke="none"/>
<rect x="717" y="200" width="3" height="3" fill="#00ffff" stroke="none"/>
<text class="t" x="716.6" y="173.5" fill="#00ffff" font-size="9.2" textLength="7" lengthAdjust="spacingAndGlyphs" transform="rotate(-90 716.6 173.5)" stroke="#00ffff" stroke-width="0.55">57</text>
<path d="M487.5 146V312" stroke="#00ffff" stroke-width="1" class="c"/>
<rect x="486" y="148" width="3" height="3" fill="#00ffff" stroke="none"/>
<rect x="486" y="307" width="3" height="3" fill="#00ffff" stroke="none"/>
<path d="M486 311.5H501" stroke="#00ffff" stroke-width="1" class="c"/>
<text class="t" x="485.2" y="229.5" fill="#00ffff" font-size="9.2" textLength="11" lengthAdjust="spacingAndGlyphs" transform="rotate(-90 485.2 229.5)" stroke="#00ffff" stroke-width="0.55">137</text>
<path d="M467 82.5H543" stroke="#00ffff" stroke-width="1" class="c"/>
<path d="M468.5 82V314" stroke="#00ffff" stroke-width="1" class="c"/>
<rect x="467" y="84" width="3" height="3" fill="#00ffff" stroke="none"/>
<rect x="467" y="309" width="3" height="3" fill="#00ffff" stroke="none"/>
<path d="M467 313.5H501" stroke="#00ffff" stroke-width="1" class="c"/>
<text class="t" x="465.6" y="202.5" fill="#00ffff" font-size="9.2" textLength="11" lengthAdjust="spacingAndGlyphs" transform="rotate(-90 465.6 202.5)" stroke="#00ffff" stroke-width="0.55">192</text>
<path d="M500.5 313V342" stroke="#00ffff" stroke-width="1" class="c"/>
<path d="M766.5 313V342" stroke="#00ffff" stroke-width="1" class="c"/>
<path d="M500 339.5H767" stroke="#00ffff" stroke-width="1" class="c"/>
<rect x="502" y="338" width="3" height="1" fill="#00ffff" stroke="none"/>
<rect x="762" y="338" width="3" height="1" fill="#00ffff" stroke="none"/>
<text class="t" x="627.8" y="338.4" fill="#00ffff" font-size="9.2" textLength="11" lengthAdjust="spacingAndGlyphs" stroke="#00ffff" stroke-width="0.55">221</text>
<text class="t" x="523" y="71.4" fill="#00ffff" font-size="9.2" textLength="8.5" lengthAdjust="spacingAndGlyphs" stroke="#00ffff" stroke-width="0.55">R8</text>
<path d="M523 72.3H532L552 91.6" stroke="#00ffff" stroke-width="1"/>
<text class="t" x="730.6" y="82.2" fill="#00ffff" font-size="9.2" textLength="7.4" lengthAdjust="spacingAndGlyphs" stroke="#00ffff" stroke-width="0.55">R8</text>
<path d="M715 91.6L731 81.2" stroke="#00ffff" stroke-width="0.8"/>
<path d="M605.5 324.5L611 314.5L613.5 319" stroke="#ffffff" stroke-width="0.9"/>
<text class="k" x="609.6" y="324.6" fill="#ffffff" font-size="6.4" textLength="6.4" lengthAdjust="spacingAndGlyphs" stroke="#ffffff" stroke-width="0.3">12.5</text>
<path d="M187.5 377.5H261.5V392.5A5.5 5.5 0 0 0 272.5 392.5V377.5H346.5A13 13 0 0 1 359.5 390.5V630.5A13 13 0 0 1 346.5 643.5H272.5V628.5A5.5 5.5 0 0 0 261.5 628.5V643.5H187.5A13 13 0 0 1 174.5 630.5V390.5A13 13 0 0 1 187.5 377.5Z" stroke="#ffffff" stroke-width="1"/>
<path d="M255.5 377.5V392.5A11.5 11.5 0 0 0 278.5 392.5V377.5" stroke="#ffffff" stroke-width="1"/>
<path d="M255.5 643.5V628.5A11.5 11.5 0 0 1 278.5 628.5V643.5" stroke="#ffffff" stroke-width="1"/>
<rect x="259.5" y="419.5" width="25" height="183" fill="none" stroke="#fff" stroke-width="1" class="c"/>
<path d="M303 444.5H360" stroke="#ffffff" stroke-width="1" class="c"/>
<path d="M303 577.5H360" stroke="#ffffff" stroke-width="1" class="c"/>
<path d="M303.5 444V578" stroke="#ffffff" stroke-width="1" class="c"/>
<path d="M123 510.5H152" stroke="#ff0000" stroke-width="1" class="c"/>
<path d="M153 510.5H219" stroke="#ff0000" stroke-width="1" class="c"/>
<path d="M220 510.5H272" stroke="#ff0000" stroke-width="1" class="c"/>
<path d="M273 510.5H337" stroke="#ff0000" stroke-width="1" class="c"/>
<path d="M338 510.5H367" stroke="#ff0000" stroke-width="1" class="c"/>
<path d="M375 510.5H391" stroke="#ff0000" stroke-width="1" class="c"/>
<path d="M266.5 366V434" stroke="#ff0000" stroke-width="1" class="c"/>
<path d="M246 392.5H289" stroke="#ff0000" stroke-width="1" class="c"/>
<path d="M266.5 611V656" stroke="#ff0000" stroke-width="1" class="c"/>
<path d="M246 628.5H289" stroke="#ff0000" stroke-width="1" class="c"/>
<path d="M330 456.5H337" stroke="#ff0000" stroke-width="1" class="c"/>
<path d="M333.5 453V460" stroke="#ff0000" stroke-width="1" class="c"/>
<path d="M329 456.5H338" stroke="#ff0000" stroke-width="1" class="c"/>
<path d="M333.5 452V461" stroke="#ff0000" stroke-width="1" class="c"/>
<circle cx="333.5" cy="456.5" r="2.2" stroke="#ffffff" stroke-width="1.2" style="shape-rendering:auto;fill:#fff"/>
<rect x="332" y="456" width="3" height="1" fill="#f00" stroke="none"/>
<rect x="333" y="457" width="1" height="1" fill="#f00" stroke="none"/>
<path d="M339 456.5H346" stroke="#ff0000" stroke-width="1" class="c"/>
<path d="M342.5 453V460" stroke="#ff0000" stroke-width="1" class="c"/>
<path d="M338 456.5H347" stroke="#ff0000" stroke-width="1" class="c"/>
<path d="M342.5 452V461" stroke="#ff0000" stroke-width="1" class="c"/>
<circle cx="342.5" cy="456.5" r="2.2" stroke="#ffffff" stroke-width="1.2" style="shape-rendering:auto;fill:#fff"/>
<rect x="341" y="456" width="3" height="1" fill="#f00" stroke="none"/>
<rect x="342" y="457" width="1" height="1" fill="#f00" stroke="none"/>
<path d="M349 456.5H356" stroke="#ff0000" stroke-width="1" class="c"/>
<path d="M352.5 453V460" stroke="#ff0000" stroke-width="1" class="c"/>
<path d="M348 456.5H357" stroke="#ff0000" stroke-width="1" class="c"/>
<path d="M352.5 452V461" stroke="#ff0000" stroke-width="1" class="c"/>
<circle cx="352.5" cy="456.5" r="2.2" stroke="#ffffff" stroke-width="1.2" style="shape-rendering:auto;fill:#fff"/>
<rect x="351" y="456" width="3" height="1" fill="#f00" stroke="none"/>
<rect x="352" y="457" width="1" height="1" fill="#f00" stroke="none"/>
<path d="M330 564.5H337" stroke="#ff0000" stroke-width="1" class="c"/>
<path d="M333.5 561V568" stroke="#ff0000" stroke-width="1" class="c"/>
<path d="M329 564.5H338" stroke="#ff0000" stroke-width="1" class="c"/>
<path d="M333.5 560V569" stroke="#ff0000" stroke-width="1" class="c"/>
<circle cx="333.5" cy="564.5" r="2.2" stroke="#ffffff" stroke-width="1.2" style="shape-rendering:auto;fill:#fff"/>
<rect x="332" y="564" width="3" height="1" fill="#f00" stroke="none"/>
<rect x="333" y="565" width="1" height="1" fill="#f00" stroke="none"/>
<path d="M339 564.5H346" stroke="#ff0000" stroke-width="1" class="c"/>
<path d="M342.5 561V568" stroke="#ff0000" stroke-width="1" class="c"/>
<path d="M338 564.5H347" stroke="#ff0000" stroke-width="1" class="c"/>
<path d="M342.5 560V569" stroke="#ff0000" stroke-width="1" class="c"/>
<circle cx="342.5" cy="564.5" r="2.2" stroke="#ffffff" stroke-width="1.2" style="shape-rendering:auto;fill:#fff"/>
<rect x="341" y="564" width="3" height="1" fill="#f00" stroke="none"/>
<rect x="342" y="565" width="1" height="1" fill="#f00" stroke="none"/>
<path d="M349 564.5H356" stroke="#ff0000" stroke-width="1" class="c"/>
<path d="M352.5 561V568" stroke="#ff0000" stroke-width="1" class="c"/>
<path d="M348 564.5H357" stroke="#ff0000" stroke-width="1" class="c"/>
<path d="M352.5 560V569" stroke="#ff0000" stroke-width="1" class="c"/>
<circle cx="352.5" cy="564.5" r="2.2" stroke="#ffffff" stroke-width="1.2" style="shape-rendering:auto;fill:#fff"/>
<rect x="351" y="564" width="3" height="1" fill="#f00" stroke="none"/>
<rect x="352" y="565" width="1" height="1" fill="#f00" stroke="none"/>
<path d="M297 377.5H306" stroke="#00ffff" stroke-width="1" class="c"/>
<path d="M288 392.5H299" stroke="#00ffff" stroke-width="1" class="c"/>
<path d="M298.5 377V393" stroke="#00ffff" stroke-width="1" class="c"/>
<rect x="297" y="379" width="3" height="3" fill="#00ffff" stroke="none"/>
<rect x="297" y="388" width="3" height="3" fill="#00ffff" stroke="none"/>
<text class="t" x="297" y="389.5" fill="#00ffff" font-size="9.2" textLength="6.5" lengthAdjust="spacingAndGlyphs" transform="rotate(-90 297 389.5)" stroke="#00ffff" stroke-width="0.55">13</text>
<path d="M297 643.5H306" stroke="#00ffff" stroke-width="1" class="c"/>
<path d="M288 628.5H299" stroke="#00ffff" stroke-width="1" class="c"/>
<path d="M298.5 628V644" stroke="#00ffff" stroke-width="1" class="c"/>
<rect x="297" y="630" width="3" height="3" fill="#00ffff" stroke="none"/>
<rect x="297" y="639" width="3" height="3" fill="#00ffff" stroke="none"/>
<text class="t" x="297" y="640.3" fill="#00ffff" font-size="9.2" textLength="6.5" lengthAdjust="spacingAndGlyphs" transform="rotate(-90 297 640.3)" stroke="#00ffff" stroke-width="0.55">13</text>
<text class="t" x="236.2" y="409.2" fill="#00ffff" font-size="9.2" textLength="10.5" lengthAdjust="spacingAndGlyphs" stroke="#00ffff" stroke-width="0.55">R10</text>
<path d="M236.5 410.2H247L260.5 398L267 392.5" stroke="#00ffff" stroke-width="1"/>
<text class="t" x="287.5" y="407" fill="#00ffff" font-size="9.2" textLength="7" lengthAdjust="spacingAndGlyphs" stroke="#00ffff" stroke-width="0.55">R5</text>
<path d="M295 408H287.5L270.5 395" stroke="#00ffff" stroke-width="1"/>
<text class="t" x="241.3" y="614.6" fill="#00ffff" font-size="9.2" textLength="10.5" lengthAdjust="spacingAndGlyphs" stroke="#00ffff" stroke-width="0.55">R10</text>
<path d="M241.5 615.5H252L266 627" stroke="#00ffff" stroke-width="1"/>
<text class="t" x="287.2" y="614" fill="#00ffff" font-size="9.2" textLength="7" lengthAdjust="spacingAndGlyphs" stroke="#00ffff" stroke-width="0.55">R5</text>
<path d="M295 615H287L269 626" stroke="#00ffff" stroke-width="1"/>
<text class="t" x="151.8" y="372.4" fill="#00ffff" font-size="9.2" textLength="11" lengthAdjust="spacingAndGlyphs" stroke="#00ffff" stroke-width="0.55">R13</text>
<path d="M152 373.3H163L190.5 393" stroke="#00ffff" stroke-width="1"/>
<text class="t" x="376.5" y="362.6" fill="#00ffff" font-size="9.2" textLength="10.5" lengthAdjust="spacingAndGlyphs" stroke="#00ffff" stroke-width="0.55">R13</text>
<path d="M387 363.5H376.5L344.5 393" stroke="#00ffff" stroke-width="1"/>
<text class="t" x="152.3" y="649.6" fill="#00ffff" font-size="9.2" textLength="11" lengthAdjust="spacingAndGlyphs" stroke="#00ffff" stroke-width="0.55">R13</text>
<path d="M152.5 650.5H163.5L190 628" stroke="#00ffff" stroke-width="1"/>
<text class="t" x="376.3" y="659.6" fill="#00ffff" font-size="9.2" textLength="10.5" lengthAdjust="spacingAndGlyphs" stroke="#00ffff" stroke-width="0.55">R13</text>
<path d="M387 660.5H376L344 628.5" stroke="#00ffff" stroke-width="1"/>
<path d="M292 444.5H307" stroke="#00ffff" stroke-width="1" class="c"/>
<path d="M292 577.5H306" stroke="#00ffff" stroke-width="1" class="c"/>
<path d="M293.5 444V578" stroke="#00ffff" stroke-width="1" class="c"/>
<rect x="292" y="446" width="3" height="3" fill="#00ffff" stroke="none"/>
<rect x="292" y="573" width="3" height="3" fill="#00ffff" stroke="none"/>
<text class="t" x="291.4" y="516" fill="#00ffff" font-size="9.2" textLength="9.5" lengthAdjust="spacingAndGlyphs" transform="rotate(-90 291.4 516)" stroke="#00ffff" stroke-width="0.55">111</text>
<path d="M314 456.5H332" stroke="#00ffff" stroke-width="1" class="c"/>
<path d="M314 564.5H332" stroke="#00ffff" stroke-width="1" class="c"/>
<path d="M314.5 456V565" stroke="#00ffff" stroke-width="1" class="c"/>
<rect x="313" y="458" width="3" height="3" fill="#00ffff" stroke="none"/>
<rect x="313" y="560" width="3" height="3" fill="#00ffff" stroke="none"/>
<text class="t" x="312.6" y="516.5" fill="#00ffff" font-size="9.2" textLength="11" lengthAdjust="spacingAndGlyphs" transform="rotate(-90 312.6 516.5)" stroke="#00ffff" stroke-width="0.55">120</text>
<path d="M324 554.5H368" stroke="#00ffff" stroke-width="1" class="c"/>
<path d="M333.5 552V561" stroke="#00ffff" stroke-width="1" class="c"/>
<path d="M342.5 552V561" stroke="#00ffff" stroke-width="1" class="c"/>
<path d="M352.5 552V561" stroke="#00ffff" stroke-width="1" class="c"/>
<path d="M359.5 552V565" stroke="#00ffff" stroke-width="1" class="c"/>
<text class="t" x="336" y="552.7" fill="#00ffff" font-size="7.6" textLength="3.2" lengthAdjust="spacingAndGlyphs" stroke="#00ffff" stroke-width="0.55">8</text>
<text class="t" x="345.6" y="552.7" fill="#00ffff" font-size="7.6" textLength="3.2" lengthAdjust="spacingAndGlyphs" stroke="#00ffff" stroke-width="0.55">8</text>
<text class="t" x="354.5" y="552.7" fill="#00ffff" font-size="7.6" textLength="3.4" lengthAdjust="spacingAndGlyphs" stroke="#00ffff" stroke-width="0.55">6</text>
<path d="M174.5 585V684" stroke="#00ffff" stroke-width="1" class="c"/>
<path d="M259.5 558V591" stroke="#00ffff" stroke-width="1" class="c"/>
<path d="M174 585.5H260" stroke="#00ffff" stroke-width="1" class="c"/>
<rect x="176" y="584" width="3" height="1" fill="#00ffff" stroke="none"/>
<rect x="255" y="584" width="3" height="1" fill="#00ffff" stroke="none"/>
<path d="M259 585.5H285" stroke="#00ffff" stroke-width="1" class="c"/>
<rect x="261" y="584" width="3" height="1" fill="#00ffff" stroke="none"/>
<rect x="280" y="584" width="3" height="1" fill="#00ffff" stroke="none"/>
<text class="t" x="214.4" y="584.6" fill="#00ffff" font-size="9.2" textLength="6.5" lengthAdjust="spacingAndGlyphs" stroke="#00ffff" stroke-width="0.55">71</text>
<text class="t" x="269.2" y="584" fill="#00ffff" font-size="9.2" textLength="6.5" lengthAdjust="spacingAndGlyphs" stroke="#00ffff" stroke-width="0.55">21</text>
<path d="M303.5 577V595" stroke="#00ffff" stroke-width="1" class="c"/>
<path d="M359.5 595V684" stroke="#00ffff" stroke-width="1" class="c"/>
<path d="M303 592.5H360" stroke="#00ffff" stroke-width="1" class="c"/>
<rect x="305" y="591" width="3" height="1" fill="#00ffff" stroke="none"/>
<rect x="355" y="591" width="3" height="1" fill="#00ffff" stroke="none"/>
<text class="t" x="328.8" y="591.6" fill="#00ffff" font-size="9.2" textLength="6.8" lengthAdjust="spacingAndGlyphs" stroke="#00ffff" stroke-width="0.55">47</text>
<path d="M174 681.5H360" stroke="#00ffff" stroke-width="1" class="c"/>
<rect x="176" y="680" width="3" height="1" fill="#00ffff" stroke="none"/>
<rect x="355" y="680" width="3" height="1" fill="#00ffff" stroke="none"/>
<text class="t" x="261.6" y="680.8" fill="#00ffff" font-size="9.2" textLength="11" lengthAdjust="spacingAndGlyphs" stroke="#00ffff" stroke-width="0.55">154</text>
</svg>
</body></html>
